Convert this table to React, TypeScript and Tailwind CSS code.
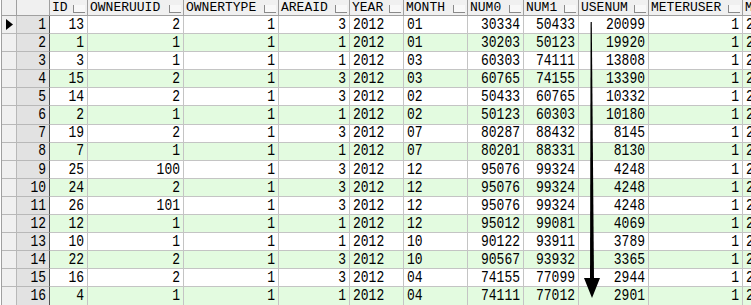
const columns = [
  { name: 'ID', align: 'right' },
  { name: 'OWNERUUID', align: 'right' },
  { name: 'OWNERTYPE', align: 'right' },
  { name: 'AREAID', align: 'right' },
  { name: 'YEAR', align: 'left' },
  { name: 'MONTH', align: 'left' },
  { name: 'NUM0', align: 'right' },
  { name: 'NUM1', align: 'right' },
  { name: 'USENUM', align: 'right' },
  { name: 'METERUSER', align: 'right' },
  { name: 'METERDATE', align: 'left' },
];

const rows = [
  ['13', '2', '1', '3', '2012', '01', '30334', '50433', '20099', '1', '2'],
  ['1', '1', '1', '1', '2012', '01', '30203', '50123', '19920', '1', '2'],
  ['3', '1', '1', '1', '2012', '03', '60303', '74111', '13808', '1', '2'],
  ['15', '2', '1', '3', '2012', '03', '60765', '74155', '13390', '1', '2'],
  ['14', '2', '1', '3', '2012', '02', '50433', '60765', '10332', '1', '2'],
  ['2', '1', '1', '1', '2012', '02', '50123', '60303', '10180', '1', '2'],
  ['19', '2', '1', '3', '2012', '07', '80287', '88432', '8145', '1', '2'],
  ['7', '1', '1', '1', '2012', '07', '80201', '88331', '8130', '1', '2'],
  ['25', '100', '1', '3', '2012', '12', '95076', '99324', '4248', '1', '2'],
  ['24', '2', '1', '3', '2012', '12', '95076', '99324', '4248', '1', '2'],
  ['26', '101', '1', '3', '2012', '12', '95076', '99324', '4248', '1', '2'],
  ['12', '1', '1', '1', '2012', '12', '95012', '99081', '4069', '1', '2'],
  ['10', '1', '1', '1', '2012', '10', '90122', '93911', '3789', '1', '2'],
  ['22', '2', '1', '3', '2012', '10', '90567', '93932', '3365', '1', '2'],
  ['16', '2', '1', '3', '2012', '04', '74155', '77099', '2944', '1', '2'],
  ['4', '1', '1', '1', '2012', '04', '74111', '77012', '2901', '1', '2'],
];

function HeaderCell({ name }: { name: string }) {
  return (
    <div className="flex justify-between border-r border-b border-[#a0a0a0] bg-[#f0f0f0] pl-[2px] pr-[2px]">
      <span className="self-center text-[13px] leading-[15px] whitespace-nowrap">{name}</span>
      <span className="mb-[2px] ml-[2px] h-[8px] w-[12px] shrink-0 self-end border-l border-b border-[#8a8a8a] bg-[#f8f8f8]" />
    </div>
  );
}

function Arrow() {
  return (
    <svg className="pointer-events-none absolute left-0 top-0" width="751" height="305" viewBox="0 0 751 305">
      <polygon points="590.6,22 591.8,22 594,280 590,280" fill="#000" />
      <polygon points="584,278 600,278 592,298" fill="#000" />
    </svg>
  );
}

export default function App() {
  return (
    <div className="relative h-[305px] w-[751px] overflow-hidden bg-white pl-[1px] font-['Liberation_Mono',monospace] text-[13px] text-black">
      <div className="grid grid-cols-[15px_33px_38px_96px_95px_71px_54px_64px_56px_55px_70px_94px_60px] grid-rows-[16px] auto-rows-[18.1px] border-l border-[#a0a0a0]">
        {/* header */}
        <div className="border-r border-b border-[#a0a0a0] bg-[#f0f0f0]" />
        <div className="border-r border-b border-[#a0a0a0] bg-[#f0f0f0]" />
        {columns.map((c) => (
          <HeaderCell key={c.name} name={c.name} />
        ))}

        {rows.map((r, i) => {
          const green = i % 2 === 1;
          return (
            <div key={i} className="contents">
              <div className="flex items-center justify-center border-r border-b border-[#b8b8b8] bg-[#f0f0f0]">
                {i === 0 && (
                  <svg width="7" height="11" viewBox="0 0 7 11">
                    <polygon points="0,0 7,5.5 0,11" fill="#000" />
                  </svg>
                )}
              </div>
              <div className="flex items-center justify-end border-r border-b border-r-[#505050] border-b-[#b8b8b8] bg-[#e2e2e2] pr-[3px]">
                <span className="inline-block scale-y-[1.2]">{i + 1}</span>
              </div>
              {r.map((v, j) => (
                <div
                  key={j}
                  className={
                    (green ? 'bg-[#e3fbe0] ' : 'bg-white ') +
                    (columns[j].align === 'right' ? 'justify-end pr-[3px] ' : 'justify-start pl-[3px] ') +
                    'flex items-center whitespace-nowrap border-r border-b border-[#c4c4c4]'
                  }
                >
                  <span className="inline-block scale-y-[1.2]">{v}</span>
                </div>
              ))}
            </div>
          );
        })}
      </div>
      <Arrow />
    </div>
  );
}
